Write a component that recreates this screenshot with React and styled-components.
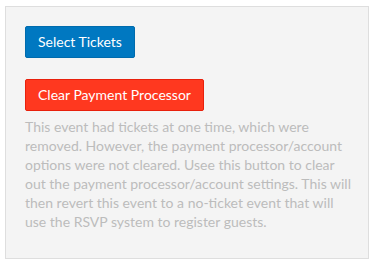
import React from 'react';
import styled, { createGlobalStyle } from 'styled-components';

const GlobalStyle = createGlobalStyle`
    body {
        margin: 0;
        background: #fff;
        font-family: Lato, "Open Sans", sans-serif;
    }
`;

const Panel = styled.div`
    box-sizing: border-box;
    width: 364px;
    height: 253px;
    margin: 6px 0 0 5px;
    padding: 19px 17px 19px 19px;
    background-color: #f4f4f4;
    border: 1px solid #dedede;
    display: flex;
    flex-direction: column;
    align-items: flex-start;
`;

const Button = styled.button`
    display: block;
    box-sizing: border-box;
    min-height: 32px;
    padding: 6px 12px;
    font-family: Lato, sans-serif;
    font-size: 14px;
    line-height: 18px;
    color: #fff;
    border-radius: 2px;
    border: 1px solid ${p => p.$border};
    background-color: ${p => p.$bg};
    margin: 0 0 ${p => p.$gap || 0}px;
    cursor: pointer;
`;

const Note = styled.p`
    margin: 6px 0 0;
    font-size: 14px;
    line-height: 19px;
    color: #bcbcbc;
`;

const App = () => (
    <>
        <GlobalStyle />
        <Panel>
            <Button $bg="#0078c1" $border="#006bad" $gap={21}>Select Tickets</Button>
            <Button $bg="#ff381f" $border="#e8200c">Clear Payment Processor</Button>
            <Note>
                This event had tickets at one time, which were removed. However, the payment
                processor/account options were not cleared. Usee this button to clear out the
                payment processor/account settings. This will then revert this event to a
                no-ticket event that will use the RSVP system to register guests.
            </Note>
        </Panel>
    </>
);

export default App;
